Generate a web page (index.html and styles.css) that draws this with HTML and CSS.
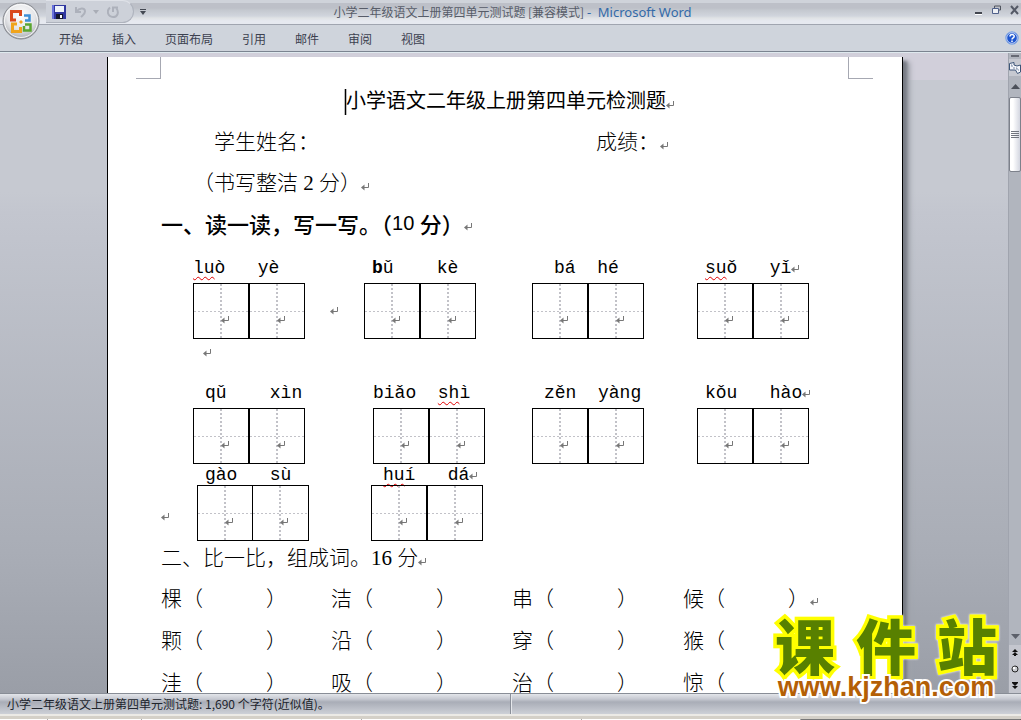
FILE: index.html
```html
<!DOCTYPE html>
<html lang="zh-CN">
<head>
<meta charset="utf-8">
<title>小学二年级语文上册第四单元测试题 [兼容模式] - Microsoft Word</title>
<link rel="stylesheet" href="styles.css">
</head>
<body>
<svg class="defs" aria-hidden="true">
  <symbol id="ret" viewBox="0 0 8 9"><path d="M7.5 1V5.5H2" fill="none" stroke="#777" /><path d="M0 5.5L3.5 2.5V8.5Z" fill="#777"/></symbol>
</svg>
<div class="app">
  <header class="titlebar">
    <button class="orb" aria-label="Office">
      <svg viewBox="0 0 38 38" width="38" height="38">
        <defs>
          <radialGradient id="og" cx=".5" cy=".35" r=".65"><stop offset="0" stop-color="#fff"/><stop offset=".6" stop-color="#e4e5e8"/><stop offset="1" stop-color="#a9acb2"/></radialGradient>
        </defs>
        <circle cx="19" cy="19" r="18" fill="url(#og)" stroke="#85888e"/>
        <circle cx="19" cy="19" r="16.5" fill="none" stroke="#fff" opacity=".8"/>
        <g fill="none" stroke-width="3">
          <path d="M14 18H9.5V9.500H18.500V14" stroke="#d9481c"/>
          <path d="M22 13.500H27.500V18.500H23" stroke="#3c8fd6" stroke-width="2.500"/>
          <path d="M15 22H10.500V29.500H18.500V25" stroke="#f0a41c"/>
          <path d="M23 22.500H28.500V28.500H22V24" stroke="#5ba630" stroke-width="2.500"/>
        </g>
        <path d="M19 18l2 2-2 2-2-2z" fill="#f0a41c"/>
      </svg>
    </button>
    <div class="qat">
      <button aria-label="保存"><svg width="14" height="14" viewBox="0 0 14 14"><path d="M0 0H14V14H1L0 13Z" fill="#3037a0"/><path d="M0 0H2V14H1L0 13Z" fill="#6a73dc"/><path d="M3 1H12V7H3Z" fill="#eef3fb"/><path d="M4 9H11V14H4Z" fill="#15182c"/><path d="M8 10H10V13H8Z" fill="#fff"/></svg></button>
      <button aria-label="撤消"><svg width="12" height="12" viewBox="0 0 12 12"><path d="M1 1V6H6M1.500 5.500C4 2 10 1 10 5.500C10 8 8 9 6 11" fill="none" stroke="#adb1bb" stroke-width="2"/></svg></button>
      <svg width="6" height="4" viewBox="0 0 6 4"><path d="M0 0H6L3 4Z" fill="#a9adb6"/></svg>
      <button class="redo" aria-label="重复"><svg width="12" height="12" viewBox="0 0 12 12"><path d="M3 1.500C-1 5 1 11 6 11C11 11 12 6 9.500 2.500M6 6V1.500H11" fill="none" stroke="#adb1bb" stroke-width="2"/></svg></button>
    </div>
    <button class="qat-more" aria-label="自定义快速访问工具栏"><svg width="6" height="6" viewBox="0 0 6 6"><path d="M0 0H6V1H0ZM0 2H6L3 6Z" fill="#444953"/></svg></button>
    <div class="caption">小学二年级语文上册第四单元测试题 [兼容模式] <span>- &nbsp;Microsoft Word</span></div>
    <div class="winbtns">
      <button aria-label="最小化"><svg width="8" height="10"><path d="M0 7H7V9H0Z" fill="#42464f"/><path d="M0 9H7V10H0Z" fill="#fff"/></svg></button>
      <button aria-label="还原"><svg width="9" height="10" viewBox="0 0 9 10"><path d="M2.500 3V1H8.500V5H7" fill="none" stroke="#50555f"/><path d="M.5 3.500H6.500V8.500H.5Z" fill="#eef0f4" stroke="#50618a"/></svg></button>
      <button aria-label="关闭"><svg width="9" height="10" viewBox="0 0 9 10"><path d="M1 1L8 9M8 1L1 9" stroke="#555a66" stroke-width="2"/></svg></button>
    </div>
  </header>
  <nav class="tabs">
    <button>开始</button><button>插入</button><button>页面布局</button><button>引用</button><button>邮件</button><button>审阅</button><button>视图</button>
    <button class="help" aria-label="帮助"><svg width="14" height="14" viewBox="0 0 14 14"><circle cx="7" cy="7" r="6.300" fill="#1e56d0" stroke="#8fb2e6"/><circle cx="7" cy="7" r="5.300" fill="none" stroke="#fff" stroke-width=".7"/><path d="M5 5.500C5 3 9.200 3 9.200 5.300C9.200 7 7 6.600 7 8.500M7 9.500V11" fill="none" stroke="#fff" stroke-width="1.500"/></svg></button>
  </nav>
  <div class="workspace">
    <main class="canvas">
      <article class="page">
        <div class="corners"><i></i><i></i></div>
        <h1><span class="caret"></span>小学语文二年级上册第四单元检测题<svg class="ret"><use href="#ret"/></svg></h1>
        <div class="line info"><span>学生姓名：</span><span>成绩：<svg class="ret"><use href="#ret"/></svg></span></div>
        <p class="line neat">（书写整洁 <b>2</b> 分）<svg class="ret"><use href="#ret"/></svg></p>
        <h2 class="line">一、读一读，写一写。（<span>10 </span>分）<svg class="ret"><use href="#ret"/></svg></h2>

        <div class="groups row-one">
          <div class="group"><p class="pinyin"><u>lu</u>ò   yè</p><div class="boxes"><i><svg class="ret"><use href="#ret"/></svg></i><i><svg class="ret"><use href="#ret"/></svg></i></div></div>
          <div class="between"><svg class="ret"><use href="#ret"/></svg></div>
          <div class="group"><p class="pinyin in-s"><b>b</b>ǔ    kè</p><div class="boxes"><i><svg class="ret"><use href="#ret"/></svg></i><i><svg class="ret"><use href="#ret"/></svg></i></div></div>
          <div></div>
          <div class="group"><p class="pinyin in-l">bá  hé</p><div class="boxes"><i><svg class="ret"><use href="#ret"/></svg></i><i><svg class="ret"><use href="#ret"/></svg></i></div></div>
          <div></div>
          <div class="group"><p class="pinyin in-s"><u>su</u>ǒ   yǐ<svg class="ret"><use href="#ret"/></svg></p><div class="boxes"><i><svg class="ret"><use href="#ret"/></svg></i><i><svg class="ret"><use href="#ret"/></svg></i></div></div>
        </div>
        <div class="blank"><svg class="ret"><use href="#ret"/></svg></div>
        <div class="groups row-two">
          <div class="group"><p class="pinyin in-m">qǔ    xìn</p><div class="boxes"><i><svg class="ret"><use href="#ret"/></svg></i><i><svg class="ret"><use href="#ret"/></svg></i></div></div>
          <div></div>
          <div class="group"><p class="pinyin">biǎo  <u>sh</u>ì</p><div class="boxes"><i><svg class="ret"><use href="#ret"/></svg></i><i><svg class="ret"><use href="#ret"/></svg></i></div></div>
          <div></div>
          <div class="group"><p class="pinyin in-m">zěn  yàng</p><div class="boxes"><i><svg class="ret"><use href="#ret"/></svg></i><i><svg class="ret"><use href="#ret"/></svg></i></div></div>
          <div></div>
          <div class="group"><p class="pinyin in-s">kǒu   hào<svg class="ret"><use href="#ret"/></svg></p><div class="boxes"><i><svg class="ret"><use href="#ret"/></svg></i><i><svg class="ret"><use href="#ret"/></svg></i></div></div>
        </div>
        <div class="groups row-three">
          <div class="between"><svg class="ret"><use href="#ret"/></svg></div>
          <div class="group"><p class="pinyin in-s">gào   sù</p><div class="boxes thin"><i><svg class="ret"><use href="#ret"/></svg></i><i><svg class="ret"><use href="#ret"/></svg></i></div></div>
          <div></div>
          <div class="group"><p class="pinyin in-m"><u>hu</u>í   dá<svg class="ret"><use href="#ret"/></svg></p><div class="boxes"><i><svg class="ret"><use href="#ret"/></svg></i><i><svg class="ret"><use href="#ret"/></svg></i></div></div>
        </div>
        <p class="line second">二、比一比，组成词。16 分<svg class="ret"><use href="#ret"/></svg></p>
        <div class="words">
          <span>棵（　　　）</span><span>洁（　　　）</span><span>串（　　　）</span><span>候（　　　）<svg class="ret"><use href="#ret"/></svg></span>
          <span>颗（　　　）</span><span>沿（　　　）</span><span>穿（　　　）</span><span>猴（</span>
          <span>洼（　　　）</span><span>吸（　　　）</span><span>治（　　　）</span><span>惊（</span>
        </div>
      </article>
    </main>
    <aside class="scroll">
      <span class="split"></span>
      <button class="ruler" aria-label="标尺"><svg width="12" height="12" viewBox="0 0 12 12"><path d="M.5 1.500L5 .5V3L8 4L11.500 3V10L8.500 11.500L6.500 8H.5Z" fill="#f4f6fb" stroke="#3d5578"/><path d="M2 3h1v2M4 6h2M7 6h1v2M9 8h1" fill="none" stroke="#7b8ba5"/></svg></button>
      <button class="up" aria-label="向上滚动"><svg width="9" height="5"><path d="M0 5L4.500 0L9 5Z" fill="#4c505a"/></svg></button>
      <span class="thumb"><i></i><i></i><i></i><i></i></span>
      <button class="down" aria-label="向下滚动"><svg width="9" height="5"><path d="M0 0L4.500 5L9 0Z" fill="#5c606a"/></svg></button>
      <div class="browse">
        <button aria-label="前一页"><svg width="6" height="7"><path d="M0 3L3 0L6 3ZM0 6L3 3L6 6ZM2 6H4V7H2Z" fill="#111"/></svg></button>
        <button aria-label="选择浏览对象"><svg width="8" height="8"><circle cx="4" cy="4" r="3" fill="#c9cbd0" stroke="#222"/><circle cx="3" cy="3" r="1.300" fill="#fff"/></svg></button>
        <button aria-label="下一页"><svg width="6" height="7"><path d="M0 1H6L3 4ZM0 4H6L3 7ZM0 0H6V1H0Z" fill="#111"/></svg></button>
      </div>
    </aside>
  </div>
  <footer class="status"><span>小学二年级语文上册第四单元测试题: 1,690 个字符(近似值)。</span><span></span></footer>
  <div class="taskbar"><i></i><i></i><i></i><i></i><i></i><i></i></div>
  <div class="mark"><div class="mark-name"><span>课</span><span>件</span><span>站</span></div><div class="mark-url">www.kjzhan.com</div></div>
</div>
</body>
</html>
```

FILE: styles.css
```css
* { box-sizing: border-box; }
body { margin: 0; font: 12px "Noto Sans CJK SC", sans-serif; color: #000; overflow: hidden; }
p, h1, h2 { margin: 0; font-weight: inherit; }
button { border: 0; padding: 0; background: none; font: inherit; color: inherit; display: flex; align-items: center; justify-content: center; }
svg { display: block; flex: none; }
.defs { display: none; }
.app { position: relative; height: 100vh; display: flex; flex-direction: column; }

.titlebar { flex: none; height: 25px; display: flex; padding-left: 46px; border-bottom: 1px solid #a0a5b0;
  background: linear-gradient(#cfd3da 0 3px, #bdc0c8 3px 8px, #c4c8cf 10px, #d1d5dd 16px, #e0e2e5 18px, #e6e9f0 21px); }
.orb { position: absolute; left: 2px; top: 2px; z-index: 2; }
.qat { width: 88px; height: 23px; display: flex; align-items: center; gap: 6px; padding-left: 6px;
  border: 1px solid #aeb3bd; border-top-color: #dfe2e8; border-left: 0; border-radius: 0 12px 12px 0; background: #cdd1d9; }
.qat button:first-child { margin-right: 3px; }
.redo { margin-left: 2px; }
.qat-more { width: 18px; height: 24px; }
.caption { flex: 1; text-align: center; line-height: 24px; color: #575c68; white-space: nowrap; padding-right: 102px; }
.caption span { color: #336aa8; font: 13px "Noto Sans", sans-serif; }
.winbtns { display: flex; gap: 9px; padding: 3px 2px 0 0; height: 16px; }

.tabs { flex: none; height: 27px; display: flex; align-items: center; gap: 29px; padding: 0 2px 0 59px; color: #3c4150;
  background: #cfd4dc; border-bottom: 1px solid #7b8490; box-shadow: 0 1px #dfe9ee; z-index: 1; }
.help { margin-left: auto; }

.workspace { flex: 1; min-height: 0; display: flex; background: linear-gradient(#d1cfda 0 28px, #c6c9d1 28px 140px, #c3c6cf 160px, #a9adb6 78%, #9a9ea7); }
.canvas { flex: 1; overflow: hidden; display: flex; justify-content: center; padding-top: 5px; }
.page { flex: 0 1 796px; height: 1123px; margin-left: 2px; padding: 0 54px 0 53px; background: #fff; border: solid #000; border-width: 0 1px;
  box-shadow: 4px 4px 3px #777b84, 7px 5px 5px #a0a4ac; color: #000; font-size: 21px; font-weight: 300; font-family: "Liberation Serif", "Noto Sans CJK SC", sans-serif; white-space: nowrap; }
.corners { display: flex; justify-content: space-between; height: 24px; margin: 0 -25px; }
.corners i { width: 25px; height: 22px; border: solid #a6a8b2; border-width: 0 1px 1px 0; }
.corners i:last-child { border-width: 0 0 1px 1px; }
.ret { display: inline-block; width: 8px; height: 9px; }
h1 { font-size: 20px; font-weight: 400; line-height: 41px; display: flex; align-items: center; padding-left: 184px; }
h1 .ret, .line .ret { margin-top: 5px; }
.caret { width: 1px; height: 26px; background: #000; outline: 1px solid #0004; outline-offset: -1px; }
.line { line-height: 41px; display: flex; align-items: center; }
.info { padding-left: 53px; }
.info span:first-child { flex: 0 0 382px; }
.info span { display: flex; align-items: center; gap: 1px; }
.neat { padding-left: 32px; white-space: pre; }
.neat b { font-weight: 400; }
h2.line { font-size: 22px; font-weight: 500; font-family: "Noto Sans CJK SC", sans-serif; line-height: 39px; padding-bottom: 2px; }
h2 span { font: 20px "Liberation Sans", sans-serif; white-space: pre; }

.groups { display: grid; padding-left: 32px; }
.row-one { grid-template-columns: 112px 59px 112px 56px 112px 53px 112px; padding-top: 8px; }
.row-two { grid-template-columns: 112px 68px 112px 47px 112px 53px 112px; }
.row-three { grid-template-columns: 36px 112px 62px 112px; padding-left: 0; }
.pinyin { font: 18px "Liberation Mono", "DejaVu Sans Mono", monospace; line-height: 30px; height: 30px; white-space: pre; }
.row-three .pinyin { line-height: 23px; height: 21px; }
.pinyin b { font-weight: 700; font-family: "Liberation Mono", monospace; }
.pinyin u { text-decoration: underline wavy #e00000 1px; text-underline-offset: 3px; text-decoration-skip-ink: none; }
.in-s { padding-left: 8px; }
.in-m { padding-left: 12px; }
.in-l { padding-left: 22px; }
.boxes { display: flex; }
.boxes i { width: 56px; height: 56px; border: 1px solid #000; padding: 31px 0 0 27px; line-height: 0;
  background:
    repeating-linear-gradient(#c2c2c8 0 2px, transparent 2px 4px) 26px 0 / 2px 100% no-repeat,
    repeating-linear-gradient(90deg, #c2c2c8 0 2px, transparent 2px 4px) 0 27px / 100% 1px no-repeat; }
.thin i:last-child { border-left: 0; }
.between { align-self: center; line-height: 0; padding-left: 25px; padding-top: 28px; }
.row-three .between { padding-left: 0; }
.blank { height: 39px; padding: 9px 0 0 42px; line-height: 0; }
.second { line-height: 35px; }
.words { display: grid; grid-template-columns: 170px 181px 171px auto; line-height: 42px; padding-top: 2px; }
.words span { display: flex; align-items: center; }
.words .ret { margin: 5px 0 0 1px; }

.scroll { flex: none; width: 13px; display: flex; flex-direction: column; align-items: center; border-left: 1px solid #a0a4ae; background: #b1b5be; }
.split { width: 8px; height: 2px; margin: 3px 0 2px; background: #666a74; }
.ruler { height: 17px; width: 100%; background: #c6c9d1; }
.up { height: 21px; }
.thumb { width: 12px; height: 75px; display: flex; flex-direction: column; gap: 1px; align-items: center; justify-content: center; border: 1px solid #7d818b; border-radius: 2px; background: linear-gradient(90deg, #fff 30%, #d3d6e0); }
.thumb i { width: 8px; height: 1px; background: #71757e; }
.down { margin-top: auto; height: 18px; }
.browse { width: 100%; height: 48px; display: flex; flex-direction: column; align-items: center; justify-content: space-around; background: #c4c6ce; }

.status { flex: none; height: 21px; display: flex; align-items: center; padding-left: 7px; color: #20242c; line-height: 18px; border-top: 1px solid #888d96;
  background: linear-gradient(#e3e5ea, #c6c9d1 5px, #a9adb7 8px, #cdd0d7); }
.status span:first-child { flex: 0 0 50%; padding-bottom: 1px; }
.status span:last-child { align-self: stretch; width: 2px; border-left: 1px solid #8a8f99; background: #e6e8ec; margin-left: -4px; }
.taskbar { flex: none; height: 6px; display: grid; grid-template-columns: 48px 94px 1fr 1fr 1fr 1fr; background: #d4d0c8; border-top: 2px solid #eceae6; padding-top: 3px; }
.taskbar i { border-top: 1px solid #fff; border-right: 1px solid #555; }
.taskbar i:last-child { border-top-color: #777; }

.mark { position: absolute; right: 22px; bottom: 19px; width: 226px; }
.mark-name { display: flex; justify-content: space-between; padding: 0 2px; font: 900 60px "Noto Sans CJK SC", sans-serif; line-height: 56px; color: #588000; -webkit-text-stroke: 7px #ff0; paint-order: stroke fill; filter: drop-shadow(0 0 1px #fff); }
.mark-url { margin-top: 1px; text-align: center; font: bold 27px "Liberation Sans", sans-serif; line-height: 28px; color: #b45f06; -webkit-text-stroke: 4px #fff; paint-order: stroke fill; position: relative; }
```
